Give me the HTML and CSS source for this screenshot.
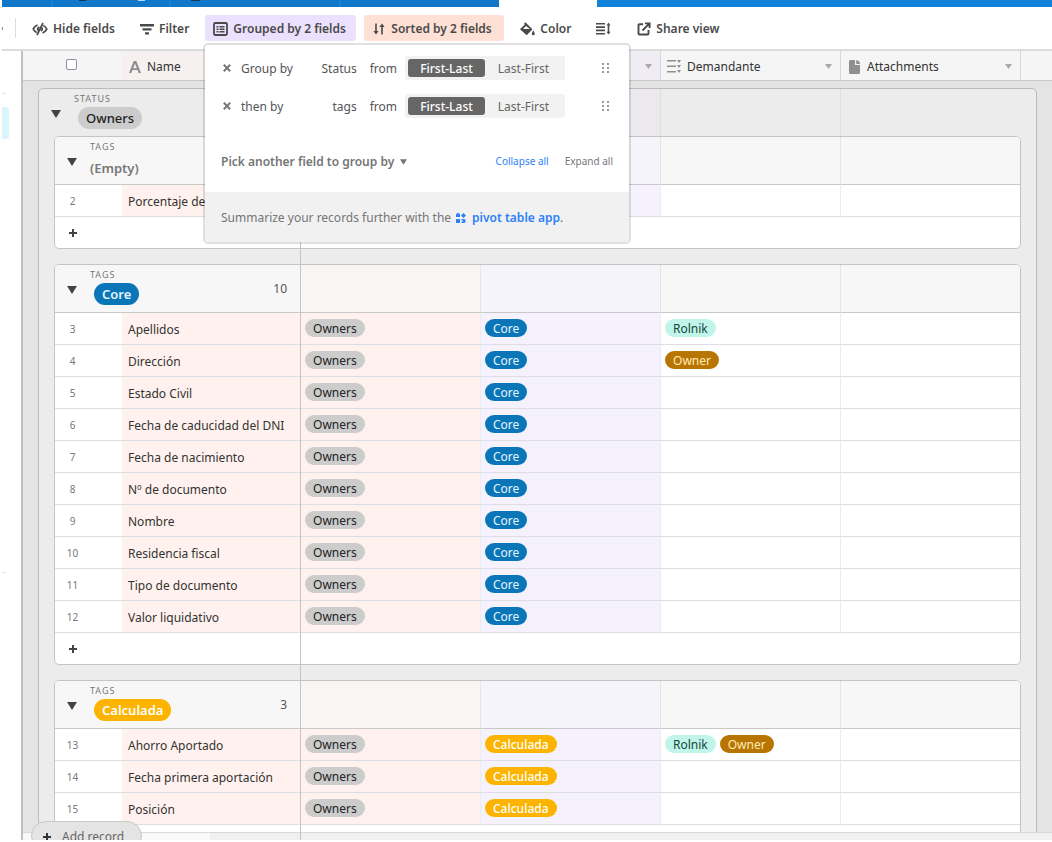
FILE: index.html
```html
<!DOCTYPE html>
<html lang="en">
<head>
<meta charset="utf-8">
<title>Grid view</title>
<link rel="stylesheet" href="styles.css">
</head>
<body>
<svg width="0" height="0" class="defs" aria-hidden="true">
  <symbol id="down" viewBox="0 0 10 8"><path d="M0 0h10L5 8z"/></symbol>
  <symbol id="plus" viewBox="0 0 8 8"><path d="M3 0h2v3h3v2H5v3H3V5H0V3h3z"/></symbol>
  <symbol id="cross" viewBox="0 0 8 8"><path d="M.8.8l6.400 6.400M7.200.8L.8 7.200" fill="none" stroke="currentColor" stroke-width="2"/></symbol>
  <symbol id="grip" viewBox="0 0 7 11"><path d="M0 0h2v2H0zM5 0h2v2H5zM0 4h2v2H0zM5 4h2v2H5zM0 8h2v2H0zM5 8h2v2H5z"/></symbol>
</svg>
<div class="app">
  <div class="tabs">
    <span class="tab t1"></span><span class="tab t2"><i class="mark dark"></i><i class="mark light"></i></span><span class="tab t3"><i class="mark dark wide"></i></span><span class="tab t4"></span><span class="tab current"></span><span class="tab rest"></span>
  </div>

  <div class="toolbar">
    <span class="cut"></span>
    <span class="rule"></span>
    <button class="tool hide" type="button">
      <svg width="16" height="14" viewBox="0 0 16 14" fill="none" stroke="currentColor" stroke-width="1.7"><path d="M5.500 3C3.500 3.800 2 5.400 1.200 7c.7 1.500 1.900 2.800 3.500 3.600M10.500 11c2-.8 3.500-2.400 4.300-4-.7-1.500-1.900-2.800-3.500-3.600M11 1L5 13M7.200 5C5.600 6 5.500 7.600 6 8.500M9 9c1.300-1 1.600-2 1.200-3.400"/></svg>
      Hide fields</button>
    <button class="tool filter" type="button">
      <svg width="14" height="12" viewBox="0 0 14 12"><path d="M0 1h14v2.400H0zM2.500 5.200h9v2.200h-9zM5 9.200h4v2.300H5z"/></svg>
      Filter</button>
    <button class="tool grouped" type="button">
      <svg width="15" height="14" viewBox="0 0 15 14"><rect x="1" y="1" width="13" height="12" rx="1.200" fill="none" stroke="currentColor" stroke-width="1.800"/><path d="M3.500 4h2v1.500h-2zM6.500 4h5v1.500h-5zM3.500 6.500h2V8h-2zM6.500 6.500h5V8h-5zM3.500 9h2v1.500h-2zM6.500 9h5v1.500h-5z"/></svg>
      Grouped by 2 fields</button>
    <button class="tool sorted" type="button">
      <svg width="14" height="14" viewBox="0 0 14 14"><path d="M3.200 1.500h1.600V9h1.800l-2.600 3.600L1.400 9h1.800zM9.200 12.500V5H7.400l2.600-3.600L12.600 5h-1.800v7.500z"/></svg>
      Sorted by 2 fields</button>
    <button class="tool color" type="button">
      <svg width="15" height="14" viewBox="0 0 15 14"><path d="M4.300 1.200L5.400.2l7 7-5.700 6L0 7.200l4.600-4.500zM6 4L3 7h7zM13.300 8.500c.9 1.500 1.500 2.500 1.500 3.300a1.500 1.500 0 0 1-3 0c0-.8.600-1.800 1.500-3.300z" fill-rule="evenodd"/></svg>
      Color</button>
    <button class="tool" type="button" aria-label="Row height">
      <svg width="15" height="13" viewBox="0 0 15 13"><path d="M0 1h9v1.600H0zM0 4.300h9v1.600H0zM0 7.600h9v1.600H0zM0 10.900h9v1.600H0zM12.500.6l2 2.800h-1.200v6.400h1.200l-2 2.800-2-2.800h1.200V3.400h-1.200z"/></svg></button>
    <button class="tool share" type="button">
      <svg width="14" height="14" viewBox="0 0 14 14" fill="none" stroke="currentColor" stroke-width="1.900"><path d="M6 2.200H2.500Q1.500 2.200 1.500 3.200V11.500q0 1 1 1H10.500q1 0 1-1V8M5.500 8.500L11.500 2.300M8 1.400H12.600V6"/></svg>
      Share view</button>

    <section class="popup">
      <div class="rules">
        <div class="level">
          <button class="plain" type="button" aria-label="Remove"><svg width="8" height="8"><use href="#cross"/></svg></button>
          <span class="verb">Group by</span><span class="field">Status</span><span class="from">from</span>
          <span class="switch"><button class="opt on" type="button">First-Last</button><button class="opt" type="button">Last-First</button></span>
          <svg class="grip" width="7" height="11"><use href="#grip"/></svg>
        </div>
        <div class="level">
          <button class="plain" type="button" aria-label="Remove"><svg width="8" height="8"><use href="#cross"/></svg></button>
          <span class="verb">then by</span><span class="field">tags</span><span class="from">from</span>
          <span class="switch"><button class="opt on" type="button">First-Last</button><button class="opt" type="button">Last-First</button></span>
          <svg class="grip" width="7" height="11"><use href="#grip"/></svg>
        </div>
      </div>
      <div class="pick">
        <button class="picker" type="button">Pick another field to group by <svg width="7" height="6"><use href="#down"/></svg></button>
        <button class="mini blue" type="button">Collapse all</button>
        <button class="mini" type="button">Expand all</button>
      </div>
      <p class="hint">Summarize your records further with the
        <svg width="10" height="10" viewBox="0 0 10 10"><path d="M0 2a2 2 0 0 1 4 0v2H0zM0 6h4v4H0zM7.500 0L10 2.500 7.500 5 5 2.500zM5.500 6h2.200a2 2 0 0 1 0 4H5.500V8.500h1.600v-1H5.500z"/></svg>
        <a href="#pivot">pivot table app</a>.</p>
    </section>
  </div>

  <div class="body">
    <aside class="side"><i class="dash"></i><i class="active"></i><i class="dash low"></i></aside>
    <main class="grid">
      <div class="cols">
        <span class="c-check"><input type="checkbox" aria-label="Select all"></span>
        <span class="col c-name">
          <svg width="12" height="12" viewBox="0 0 12 12"><path d="M4.700 0h2.600L12 12H9.600L8.500 9H3.500L2.400 12H0zM6 2.400L4.200 7.200h3.600z" fill-rule="evenodd"/></svg>Name</span>
        <span class="col peach"></span>
        <span class="col lilac"><svg class="caret" width="7" height="5" viewBox="0 0 7 5"><path d="M0 0h7L3.500 5z"/></svg></span>
        <span class="col">
          <svg width="14" height="13" viewBox="0 0 14 13"><path d="M0 0h9v1.600H0zM0 5.500h9v1.600H0zM0 11h9v1.600H0zM10 0h4l-2 3zM10 5h4l-2 3zM10 10h4l-2 3z"/></svg>Demandante
          <svg class="caret" width="7" height="5" viewBox="0 0 7 5"><path d="M0 0h7L3.500 5z"/></svg></span>
        <span class="col files">
          <svg width="11" height="14" viewBox="0 0 11 14"><path d="M1.500 0H6v5h5v7.500q0 1.500-1.500 1.500h-8Q0 14 0 12.500v-11Q0 0 1.500 0zM7.200 0Q11 .8 11 3.900H7.200z"/></svg>Attachments
          <svg class="caret" width="7" height="5" viewBox="0 0 7 5"><path d="M0 0h7L3.500 5z"/></svg></span>
      </div>

      <div class="view">
        <section class="outer">
          <div class="outer-head">
            <div class="lead">
              <button class="plain toggle" type="button" aria-label="Collapse"><svg width="10" height="8"><use href="#down"/></svg></button>
              <div class="title"><span class="kind">STATUS</span><span class="pill big grey">Owners</span></div>
            </div>
            <span class="peach"></span><span class="lilac"></span><span></span><span></span>
          </div>

          <div class="card">
            <table>
              <colgroup><col class="w-num"><col class="w-name"><col class="w-col"><col class="w-col"><col class="w-col"><col></colgroup>
              <thead><tr><th colspan="2"><div class="lead">
                <button class="plain toggle" type="button" aria-label="Collapse"><svg width="10" height="8"><use href="#down"/></svg></button>
                <div class="title"><span class="kind">TAGS</span><span class="none">(Empty)</span></div></div></th><th></th><th></th><th></th><th></th></tr></thead>
              <tbody><tr><td>2</td><td>Porcentaje de</td><td></td><td></td><td></td><td></td></tr></tbody>
            </table>
            <button class="plain add" type="button" aria-label="Add record"><svg width="8" height="8"><use href="#plus"/></svg></button>
          </div>

          <div class="card">
            <table>
              <colgroup><col class="w-num"><col class="w-name"><col class="w-col"><col class="w-col"><col class="w-col"><col></colgroup>
              <thead><tr><th colspan="2"><div class="lead">
                <button class="plain toggle" type="button" aria-label="Collapse"><svg width="10" height="8"><use href="#down"/></svg></button>
                <div class="title"><span class="kind">TAGS</span><span class="pill big core">Core</span></div><span class="count">10</span></div></th><th></th><th></th><th></th><th></th></tr></thead>
              <tbody>
                <tr><td>3</td><td>Apellidos</td><td><span class="pill grey">Owners</span></td><td><span class="pill core">Core</span></td><td><span class="pill mint">Rolnik</span></td><td></td></tr>
                <tr><td>4</td><td>Dirección</td><td><span class="pill grey">Owners</span></td><td><span class="pill core">Core</span></td><td><span class="pill brown">Owner</span></td><td></td></tr>
                <tr><td>5</td><td>Estado Civil</td><td><span class="pill grey">Owners</span></td><td><span class="pill core">Core</span></td><td></td><td></td></tr>
                <tr><td>6</td><td>Fecha de caducidad del DNI</td><td><span class="pill grey">Owners</span></td><td><span class="pill core">Core</span></td><td></td><td></td></tr>
                <tr><td>7</td><td>Fecha de nacimiento</td><td><span class="pill grey">Owners</span></td><td><span class="pill core">Core</span></td><td></td><td></td></tr>
                <tr><td>8</td><td>Nº de documento</td><td><span class="pill grey">Owners</span></td><td><span class="pill core">Core</span></td><td></td><td></td></tr>
                <tr><td>9</td><td>Nombre</td><td><span class="pill grey">Owners</span></td><td><span class="pill core">Core</span></td><td></td><td></td></tr>
                <tr><td>10</td><td>Residencia fiscal</td><td><span class="pill grey">Owners</span></td><td><span class="pill core">Core</span></td><td></td><td></td></tr>
                <tr><td>11</td><td>Tipo de documento</td><td><span class="pill grey">Owners</span></td><td><span class="pill core">Core</span></td><td></td><td></td></tr>
                <tr><td>12</td><td>Valor liquidativo</td><td><span class="pill grey">Owners</span></td><td><span class="pill core">Core</span></td><td></td><td></td></tr>
              </tbody>
            </table>
            <button class="plain add" type="button" aria-label="Add record"><svg width="8" height="8"><use href="#plus"/></svg></button>
          </div>

          <div class="card">
            <table>
              <colgroup><col class="w-num"><col class="w-name"><col class="w-col"><col class="w-col"><col class="w-col"><col></colgroup>
              <thead><tr><th colspan="2"><div class="lead">
                <button class="plain toggle" type="button" aria-label="Collapse"><svg width="10" height="8"><use href="#down"/></svg></button>
                <div class="title"><span class="kind">TAGS</span><span class="pill big amber">Calculada</span></div><span class="count">3</span></div></th><th></th><th></th><th></th><th></th></tr></thead>
              <tbody>
                <tr><td>13</td><td>Ahorro Aportado</td><td><span class="pill grey">Owners</span></td><td><span class="pill amber">Calculada</span></td><td><span class="pill mint">Rolnik</span><span class="pill brown">Owner</span></td><td></td></tr>
                <tr><td>14</td><td>Fecha primera aportación</td><td><span class="pill grey">Owners</span></td><td><span class="pill amber">Calculada</span></td><td></td><td></td></tr>
                <tr><td>15</td><td>Posición</td><td><span class="pill grey">Owners</span></td><td><span class="pill amber">Calculada</span></td><td></td><td></td></tr>
              </tbody>
            </table>
            <button class="plain add" type="button" aria-label="Add to group"></button>
          </div>
        </section>
      </div>
      <div class="summary"></div>
      <button class="record" type="button"><svg width="8" height="8"><use href="#plus"/></svg>Add record</button>
    </main>
  </div>
</div>
</body>
</html>
```
FILE: styles.css
```css
* { box-sizing: border-box; }
body {
  margin: 0;
  background: #fff;
  color: #333;
  font: 12px/16px "Noto Sans", "Open Sans", sans-serif;
}
button { font: inherit; color: inherit; border: 0; background: none; padding: 0; }
svg { display: block; flex: none; fill: currentColor; }
svg[fill="none"] { fill: none; }
.defs { position: absolute; }

.app {
  display: flex;
  flex-direction: column;
  height: calc(100vh - 2px);
  margin-left: 2px;
  overflow: hidden;
}

/* base tabs */
.tabs { display: flex; flex: none; height: 7px; background: #1283da; }
.tab { display: flex; align-items: flex-start; background: #1177c9; border-right: 2px solid #1283da; }
.t1 { width: 51px; }
.t2 { width: 118px; padding-left: 26px; gap: 52px; }
.t3 { width: 170px; padding-left: 20px; }
.t4 { width: 158px; border-right: 0; }
.current { width: 98px; background: #fff; border-right: 0; }
.rest { flex: 1; background: #1283da; border-right: 0; }
.mark { width: 7px; height: 1px; }
.mark.dark { background: #173450; }
.mark.light { background: #b5d9f5; }
.mark.wide { width: 9px; }

/* view toolbar */
.toolbar {
  position: relative;
  z-index: 2;
  display: flex;
  flex: none;
  align-items: center;
  gap: 8px;
  height: 44px;
  border-bottom: 2px solid #dcdcdc;
}
.cut { width: 1px; height: 3px; background: #888; }
.rule { width: 1px; height: 20px; margin-left: 4px; background: #ddd; }
.tool {
  display: flex;
  align-items: center;
  gap: 5px;
  height: 26px;
  padding: 1px 8px 0;
  border-radius: 3px;
  color: #4a4a4a;
  font-weight: 600;
  white-space: nowrap;
}
.hide { min-width: 100px; }
.filter { min-width: 65px; }
.grouped { min-width: 151px; background: #ebe0fd; }
.sorted { min-width: 140px; background: #ffe0d4; }
.color { min-width: 68px; }
.share { margin-left: 2px; }

/* group-by popup */
.popup {
  position: absolute;
  top: 38px;
  left: 203px;
  width: 424px;
  border-radius: 3px;
  background: #fff;
  box-shadow: 0 0 0 2px rgba(0, 0, 0, .12);
  color: #555;
}
.rules { display: grid; gap: 14px; padding: 11px 20px 0 18px; }
.level { display: flex; align-items: center; height: 24px; }
.level .plain { color: #777; }
.verb { width: 60px; margin-left: 10px; padding-top: 1px; }
.field { flex: 1; padding-top: 1px; text-align: right; }
.from { margin: 0 8px 0 13px; padding-top: 1px; }
.switch { display: flex; align-items: center; width: 160px; height: 24px; padding: 0 3px; border-radius: 3px; background: #f2f2f2; }
.opt { flex: 1; height: 18px; padding-top: 1px; border-radius: 3px; color: #666; }
.opt.on { background: #666; color: #fff; font-weight: 500; }
.grip { margin-left: 37px; color: #999; }
.pick { display: flex; align-items: center; gap: 16px; padding: 35px 16px 22px; }
.picker { display: flex; align-items: center; gap: 6px; margin-right: auto; color: #757575; font-weight: 600; }
.mini { padding-bottom: 1px; color: #777; font-size: 10px; }
.blue { color: #2d7ff9; }
.hint { display: flex; align-items: center; height: 50px; margin: 0; padding: 1px 16px 0; border-radius: 0 0 3px 3px; background: #f1f1f1; color: #757575; }
.hint svg { margin: 0 6px 0 5px; color: #2d7ff9; }
.hint a { color: #2d7ff9; font-weight: 600; text-decoration: none; }

/* layout below the toolbar */
.body { display: flex; flex: 1; min-height: 0; }
.side { display: flex; flex-direction: column; width: 19px; }
.dash { width: 3px; height: 1px; margin-top: 42px; background: #ddd; }
.dash.low { margin-top: 433px; }
.active { width: 7px; height: 32px; margin-top: 13px; border-radius: 0 3px 3px 0; background: #dbf5ff; }
.grid { position: relative; display: flex; flex: 1; flex-direction: column; min-width: 0; border-left: 2px solid #c0c0c0; overflow: hidden; }
/* frozen column divider */
.grid::after { content: ""; position: absolute; top: 0; bottom: 0; left: 277px; width: 1px; background: #c4c4c4; }

/* column headings */
.cols { display: flex; flex: none; height: 30px; padding-right: 31px; border-bottom: 1px solid #c8c8c8; background: #f5f5f5; }
.c-check { width: 98px; padding: 8px 0 0 43px; }
.c-check input { appearance: none; display: block; width: 11px; height: 11px; margin: 0; border: 1px solid #8b939c; border-radius: 2px; background: #fff; }
.col { display: flex; flex: 0 0 180px; align-items: center; gap: 6px; padding: 2px 8px 0 6px; border-right: 1px solid #d8d9dd; }
.col:last-child { flex: 1; }
.col svg { color: #8f8f8f; }
.col .caret { margin-left: auto; color: #aaa; }
.col.files { gap: 7px; padding-left: 8px; }
.c-name { padding-left: 8px; background: #f6f1f0; }
.cols .lilac { background: #efedf3; }
.cols .peach { background: #f6f1f0; }

/* records */
.view { flex: 1; min-height: 0; padding: 7px 15px 0; background: #e4e4e4; overflow: hidden; }
.outer { padding: 0 15px 16px; border: 1px solid #bbb; border-radius: 5px; background: #ececec; }
.outer-head { display: grid; grid-template-columns: 262px 180px 180px 180px 1fr; height: 47px; margin: 0 -15px; }
.outer-head > span { border-right: 1px solid #e0e0e0; }
.outer-head > span:last-child { border: 0; }
.outer-head .lilac { background: #ebe9ee; }
.outer-head .peach { background: #eee9e8; }
.card { margin-bottom: 15px; border: 1px solid #c4c4c4; border-radius: 5px; background: #fff; overflow: hidden; }
table { width: 100%; table-layout: fixed; border-collapse: separate; border-spacing: 0; }
.w-num { width: 67px; }
.w-name { width: 179px; }
.w-col { width: 180px; }
th { height: 48px; padding: 0; border-bottom: 1px solid #c8c8c8; border-right: 1px solid #e5e5e8; background: #f7f7f7; font-weight: 400; text-align: left; }
th:nth-child(2) { background: #f9f5f4; }
th:nth-child(3) { background: #f5f4fa; }
td { height: 32px; padding: 2px 6px 0; border-bottom: 1px solid #dcdee3; border-right: 1px solid #ececf0; white-space: nowrap; }
th:last-child, td:last-child { border-right: 0; }
td:nth-child(1) { padding: 0 32px 0 0; border-right: 0; color: #777; font-size: 10px; text-align: center; }
td:nth-child(2) { background: #fff2ee; }
td:nth-child(n+3) { padding: 6px 4px 0; vertical-align: top; }
td:nth-child(3) { background: #fff2ee; }
td:nth-child(4) { background: #f5f2fe; }

.lead { display: flex; height: 47px; padding: 0 13px 0 12px; }
.toggle { align-self: flex-start; margin: 21px 13px 0 0; color: #444; }
.title { display: flex; flex-direction: column; align-items: flex-start; padding-top: 3px; }
.kind { height: 15px; color: #777; font-size: 9px; line-height: 14px; letter-spacing: 1px; }
.none { color: #777; font-size: 13px; font-weight: 600; line-height: 26px; }
.count { margin: 16px 0 0 auto; color: #555; }
.pill { display: inline-block; height: 18px; padding: 0 8px; border-radius: 9px; line-height: 20px; vertical-align: top; }
.pill + .pill { margin-left: 4px; }
.pill.big { height: 22px; margin-left: 4px; border-radius: 11px; font-size: 13px; font-weight: 500; line-height: 22px; }
.grey { background: #ccc; color: #222; }
.core { background: #0b76b7; color: #e2f4ff; }
.mint { background: #c2f5e9; color: #12483c; }
.brown { background: #b87503; color: #ffeab6; }
.amber { background: #fcb400; color: #fff; font-weight: 500; }
.pill.big.core, .pill.big.amber { font-weight: 600; }
.add { display: flex; align-items: center; width: 100%; height: 31px; padding-left: 14px; color: #444; }

/* footer */
.summary { flex: none; height: 8px; border-top: 1px solid #d8d9dd; background: linear-gradient(90deg, #f9f9f9 187px, #f0f0f0 187px); }
.record { position: absolute; z-index: 1; bottom: -11px; left: 8px; display: flex; align-items: center; gap: 11px; height: 30px; padding: 2px 17px 0 11px; border: 1px solid #c8c8c8; border-radius: 15px; background: #e4e4e4; color: #666; }
.record svg { color: #333; }
```
